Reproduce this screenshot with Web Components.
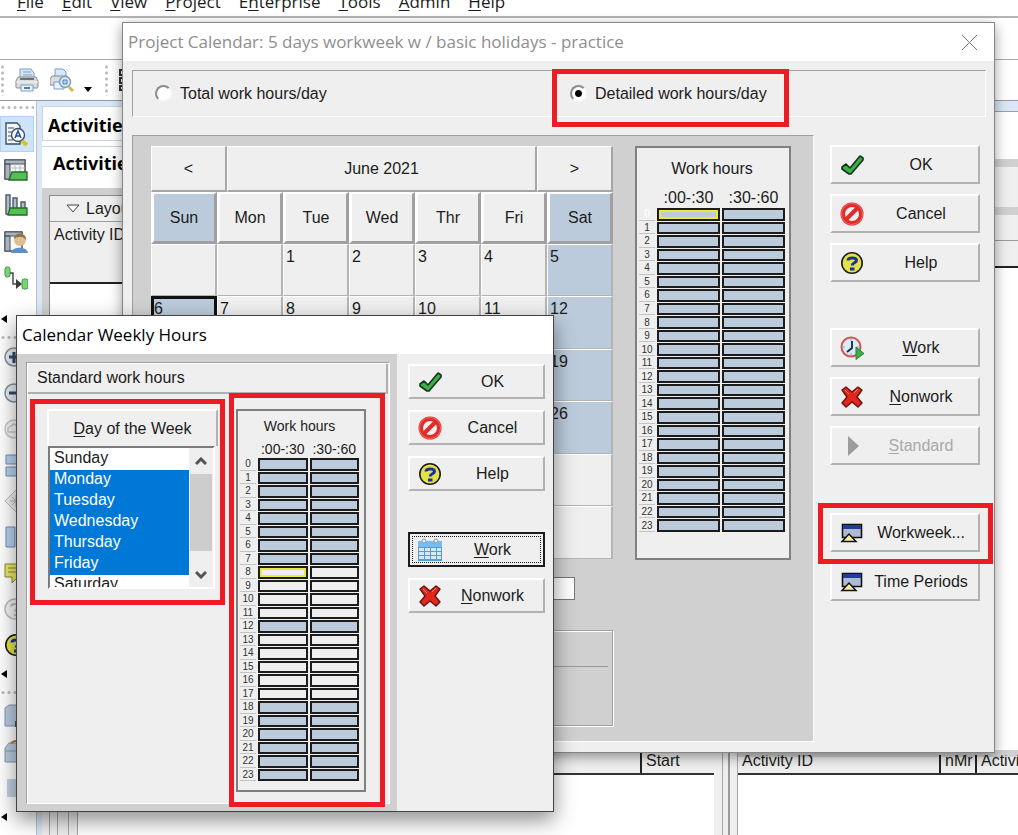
<!DOCTYPE html>
<html lang="en">
<head>
<meta charset="utf-8">
<title>Project Calendar</title>
<style>
  body {
    margin: 0;
    font: 16px/18px "Liberation Sans", Arial, sans-serif;
    color: #1c1c1c;
    background: #fff;
    --face: #efefef;
    --panel: #d0d0d0;
    --shade: #a6a6a6;
    --nonwork: #bccbdb;
    --mark: #ed1c24;
    --ui-font: "Open Sans", "Noto Sans", sans-serif;
  }
</style>
</head>
<body>
<p6-app></p6-app>

<script>
(function () {
  const icons = {
    check: '<path d="M2 14l4-3 4 4L20 3l3 2v2L11 21H9L2 16z" fill="#3fae49" stroke="#14351a" stroke-width="1.6" stroke-linejoin="round"/>',
    cancel: '<circle cx="12" cy="12" r="11.5" fill="#e02b2b"/><circle cx="12" cy="12" r="10.5" fill="none" stroke="#f06a5f"/><circle cx="12" cy="12" r="7" fill="#f4eeee"/><path d="M6 17.500L17.500 6" stroke="#e02b2b" stroke-width="4"/>',
    help: '<circle cx="12" cy="12" r="10.200" fill="#e3e248" stroke="#1d1d12" stroke-width="1.600"/><path d="M8 9.500C8 6 16.500 6 16.500 9.500c0 2.500-4.300 2-4.300 5" fill="none" stroke="#1b2fa5" stroke-width="3"/><path d="M10 16.500h4.500v3H10z" fill="#1b2fa5"/>',
    clock: '<circle cx="11" cy="11" r="9.500" fill="#d8ecfa" stroke="#cf5656" stroke-width="2"/><path d="M11 3v2M11 17v2M3 11h2M17 11h2" stroke="#7fa9c9"/><path d="M12 5v7l-5 4" fill="none" stroke="#16243c" stroke-width="1.800"/><path d="M16 11l8 6.500-8 6z" fill="#3fae49" stroke="#278036"/>',
    cross: '<path d="M2 5l4-3 6 5 6-5 4 3-5 7 5 6-4 4-6-5-6 5-4-4 5-6z" fill="#e3261b" stroke="#641410" stroke-width="1.400" stroke-linejoin="round"/><path d="M5 5l4 4M18 4l-4 4" stroke="#ff8a7c"/>',
    play: '<path d="M8 2l11 10L8 22z" fill="#9c9c9c"/>',
    slides: '<path d="M2.500 3.500h19v13h-19z" fill="#aebbd3" stroke="#111" stroke-width="1.600"/><path d="M3 4h18v4H3z" fill="#1d3c9c"/><path d="M2 20.500L9 13l7 7.500z" fill="#f6ee9d" stroke="#111" stroke-width="1.500"/>',
    month: '<path d="M0 3h24v20H0z" fill="#4f9cdf"/><path d="M0 3h24v6H0z" fill="#74bcf3"/><path d="M1 10h5v3H1zM7 10h5v3H7zM13 10h5v3h-5zM19 10h4v3h-4zM1 14h5v3H1zM7 14h5v3H7zM13 14h5v3h-5zM19 14h4v3h-4zM1 18h5v3H1zM7 18h5v3H7zM13 18h5v3h-5zM19 18h4v3h-4z" fill="#d3eafc"/><circle cx="6" cy="3" r="2" fill="#eee" stroke="#8a9aa8"/><circle cx="18" cy="3" r="2" fill="#eee" stroke="#8a9aa8"/>',
    printer: '<path d="M5 1h11l3 4v6H5z" fill="#d5e8fa" stroke="#7c9fc2"/><path d="M8 4h8M8 7h9" stroke="#7c9fc2"/><path d="M3 9h18l2 4v6q0 1-1 1H2q-1 0-1-1v-6z" fill="#dcdcdc" stroke="#8a8a8a"/><path d="M5 10h14v2H5z" fill="#6b7176"/><path d="M1 14h22" stroke="#f7f7f7"/><path d="M6 17h12v6H6z" fill="#eaf3fb" stroke="#7c9fc2"/><path d="M9 20h6" stroke="#4a7db3" stroke-width="2"/>',
    preview: '<path d="M5 1h8l3 3v5H5z" fill="#d5e8fa" stroke="#7c9fc2"/><path d="M2 8h15l1 3v6H0v-6z" fill="#dcdcdc" stroke="#8a8a8a"/><path d="M4 14h10v7H4z" fill="#eaf3fb" stroke="#7c9fc2"/><path d="M19 19l4 4" stroke="#e0b04a" stroke-width="3"/><circle cx="15" cy="14" r="5.500" fill="#e2effb" stroke="#7c9fc2" stroke-width="1.500"/><path d="M13 12h4v4h-4z" fill="#b8d5f0" stroke="#4a7db3"/>',
    find: '<path d="M2 1h11l3 3v18H2z" fill="#f4f8fc" stroke="#3d4f66" stroke-width="1.400"/><path d="M4 6h6M4 10h4M4 14h3M4 18h5" stroke="#3d4f66"/><path d="M18 19l5 4" stroke="#d9c32a" stroke-width="4"/><circle cx="14" cy="13" r="6.500" fill="#fff" stroke="#3d4f66" stroke-width="1.400"/><path d="M11 16l3-7 3 7M12 14h4" fill="none" stroke="#1f4f95" stroke-width="1.500"/>',
    grid: '<path d="M1 2h20v19H1z" fill="#f5f7f9" stroke="#4c5258" stroke-width="1.500"/><path d="M1 2h20v4H1zM1 6h5v15H1z" fill="#a9b4c1" stroke="#4c5258"/><path d="M6 10h15M11 6v15M16 6v15" stroke="#b9c0c7"/><path d="M8 14h15v8H5z" fill="#55c052" stroke="#236b29" stroke-width="1.300"/>',
    bars: '<path d="M2 1h4v19H2zM9 4h4v14H9zM17 8h4v9h-4z" fill="#aebccb" stroke="#4c5a69" stroke-width="1.400"/><path d="M6 14h17v7H4z" fill="#55c052" stroke="#236b29" stroke-width="1.300"/>',
    person: '<path d="M1 2h17v19H1z" fill="#f5f7f9" stroke="#4c5258" stroke-width="1.500"/><path d="M1 2h17v4H1zM1 6h5v15H1z" fill="#a9b4c1" stroke="#4c5258"/><path d="M7 23c1-7 16-7 17 0z" fill="#5b90c8"/><circle cx="16" cy="10" r="6" fill="#e2bd93"/><path d="M10 9c0-8 13-7 12 1-3-4-8-4-12-1z" fill="#8d7448"/>',
    trace: '<rect x="1" y="1" width="5" height="10" rx="2" fill="#7fd277" stroke="#3a9a3f"/><rect x="18" y="13" width="6" height="10" rx="2" fill="#7fd277" stroke="#3a9a3f"/><path d="M6 7h3v11h4" fill="none" stroke="#4a4a4a" stroke-width="1.500"/><path d="M12 13l6 5-6 5z" fill="#3c3c3c"/>',
    plus: '<circle cx="10" cy="12" r="9" fill="#e6edf4" stroke="#878f98" stroke-width="1.500"/><path d="M5 12h11M10 7v11" stroke="#324a68" stroke-width="3"/>',
    minus: '<circle cx="10" cy="12" r="9" fill="#e6edf4" stroke="#878f98" stroke-width="1.500"/><path d="M5 12h11" stroke="#324a68" stroke-width="3"/>',
    fit: '<circle cx="10" cy="12" r="9" fill="#f6f6f6" stroke="#c9c9c9" stroke-width="1.500"/><path d="M4 15v-4l6-4 6 4v4z" fill="none" stroke="#c9c9c9" stroke-width="1.500"/>',
    rows: '<path d="M2 2h20v9H2zM2 14h20v9H2z" fill="#b8d1ee" stroke="#6c8db5"/>',
    spark: '<path d="M1 12L12 1l11 11-11 11z" fill="#f0f0f0" stroke="#bdbdbd"/><path d="M6 12h12M12 6v12M8 8l8 8M16 8l-8 8" stroke="#b5b5b5"/>',
    columns: '<path d="M2 2h9v20H2zM14 2h9v20h-9z" fill="#b8d1ee" stroke="#6c8db5"/>',
    note: '<path d="M1 3h22v13h-9l-6 6v-6H1z" fill="#ece767" stroke="#8c8838"/><path d="M4 7h16M4 11h16" stroke="#8c8838"/>',
    faded: '<circle cx="11" cy="12" r="10" fill="#f3f3f3" stroke="#bdbdbd" stroke-width="1.500"/><path d="M7 9.500c0-3.500 8-3.500 8 0 0 2.500-4 2-4 5M11 17v2" fill="none" stroke="#bdbdbd" stroke-width="2"/>',
    store: '<path d="M1 4l4-3h14v21H1z" fill="#b9cbe0" stroke="#8297b0"/><path d="M11 17h10v6H11z" fill="#39536f"/>',
    load: '<path d="M1 8l4-5h14v19H1z" fill="#b9cbe0" stroke="#8297b0"/><path d="M1 11h20" stroke="#8297b0"/><path d="M7 3l6-3 6 5" fill="none" stroke="#b07a35" stroke-width="2"/>',
    sheet: '<path d="M3 3h18v18H3z" fill="#c3d1e2"/>',
    tree: '<path d="M1 2h7v5H1zM1 10h7v5H1zM1 18h7v4H1zM10 4h12M10 12h12M10 20h12" fill="none" stroke="#333" stroke-width="2"/>'
  };

  const svg = (name, size) =>
    `<svg width="${size}" height="${size}" viewBox="0 0 24 24" aria-hidden="true">${icons[name]}</svg>`;

  function define(name, html, setup) {
    const template = document.createElement('template');
    template.innerHTML = html;
    customElements.define(name, class extends HTMLElement {
      constructor() {
        super();
        this.attachShadow({ mode: 'open' });
      }

      connectedCallback() {
        if (this.shadowRoot.childNodes.length) return;
        this.shadowRoot.appendChild(template.content.cloneNode(true));
        if (setup) setup(this, this.shadowRoot);
      }
    });
  }

  // icon + caption push button
  define('p6-button', `
    <style>
      :host { display: block; }
      button {
        display: flex;
        align-items: center;
        box-sizing: border-box;
        width: 100%;
        height: var(--button-height, 39px);
        padding: 0 2px 0 8px;
        font: inherit;
        color: inherit;
        background: var(--face);
        border: 2px solid;
        border-color: #fff #b2b2b2 #b2b2b2 #fff;
      }
      button:disabled { color: #a9a9a9; }
      span { flex: 1; white-space: nowrap; text-align: center; }
      svg { flex: none; margin-right: 2px; }
      ::slotted(u) { text-underline-offset: 2px; }
      :host([focused]) button {
        border-color: #1c1c1c;
        outline: 1px dotted #1c1c1c;
        outline-offset: -5px;
      }
    </style>
    <button type="button"><span><slot></slot></span></button>
  `, (host, root) => {
    const button = root.querySelector('button');
    button.disabled = host.hasAttribute('disabled');
    button.insertAdjacentHTML('afterbegin', svg(host.getAttribute('icon'), 24));
  });

  // red frame drawn over whatever is slotted
  define('p6-mark', `
    <style>
      :host { display: block; position: relative; }
      :host::after {
        content: "";
        position: absolute;
        inset: var(--reach);
        border: 5px solid var(--mark);
        pointer-events: none;
        z-index: 1;
      }
    </style>
    <slot></slot>
  `);

  define('p6-radio', `
    <style>
      :host { display: block; }
      label { display: flex; align-items: center; gap: 8px; }
      input {
        appearance: none;
        width: 17px;
        height: 17px;
        margin: 0;
        border: 2px solid;
        border-color: #8b8b8b #f8f8f8 #f8f8f8 #8b8b8b;
        border-radius: 50%;
        background: #fff;
      }
      input:checked { background: radial-gradient(circle, #000 3px, #fff 4px); }
    </style>
    <label><input type="radio" name="mode"><span><slot></slot></span></label>
  `, (host, root) => {
    root.querySelector('input').checked = host.hasAttribute('checked');
  });

  define('p6-window', `
    <style>
      :host {
        display: block;
        position: absolute;
        border: 1px solid #858585;
        box-sizing: border-box;
        background: var(--face);
        box-shadow: 0 4px 12px rgba(0, 0, 0, 0.4);
      }
      header {
        display: flex;
        align-items: center;
        justify-content: space-between;
        height: 38px;
        padding: 0 16px 0 5px;
        font: 17px/24px var(--ui-font);
        background: #fff;
        color: #000;
      }
      :host([inactive]) header { color: #8e8e8e; }
      h1 { margin: 0; font: inherit; white-space: nowrap; }
      button { display: none; padding: 0; border: 0; background: none; }
      :host([closable]) button { display: block; }
      svg { display: block; }
    </style>
    <header>
      <h1></h1>
      <button type="button" aria-label="Close">
        <svg width="17" height="17" viewBox="0 0 17 17"><path d="M1 1l15 15M16 1L1 16" stroke="#777" fill="none"/></svg>
      </button>
    </header>
    <slot></slot>
  `, (host, root) => {
    root.querySelector('h1').textContent = host.getAttribute('heading');
  });

  define('p6-month', `
    <style>
      :host { display: block; }
      nav { display: flex; height: 46px; background: var(--face); }
      nav > * {
        display: flex;
        align-items: center;
        justify-content: center;
        box-sizing: border-box;
        padding: 0;
        font: inherit;
        color: inherit;
        background: var(--face);
        border: solid;
        border-width: 1px 2px 2px 1px;
        border-color: #fff var(--shade) var(--shade) #fff;
      }
      nav button { width: 76px; }
      nav span { flex: 1; }
      table {
        width: 100%;
        table-layout: fixed;
        border-collapse: separate;
        border-spacing: 0;
      }
      th {
        height: 52px;
        box-sizing: border-box;
        padding: 0;
        font-weight: normal;
        background: var(--face);
        border: solid;
        border-width: 2px 3px 3px 3px;
        border-color: #fff #a0a0a0 #a0a0a0 #fff;
      }
      td {
        height: 52px;
        box-sizing: border-box;
        padding: 3px 2px 0;
        vertical-align: top;
        background: var(--face);
        border: solid;
        border-width: 1px 2px 1px 1px;
        border-color: #fff #b4b4b4 #b4b4b4 #fff;
      }
      tr:nth-child(even) td { height: 53px; }
      .off { background: var(--nonwork); }
      td.current { padding: 1px 0 0; border: 3px solid #111; }
    </style>
    <nav>
      <button type="button">&lt;</button>
      <span>June 2021</span>
      <button type="button">&gt;</button>
    </nav>
    <table>
      <thead><tr></tr></thead>
      <tbody></tbody>
    </table>
  `, (host, root) => {
    const days = ['Sun', 'Mon', 'Tue', 'Wed', 'Thr', 'Fri', 'Sat'];
    const weekend = i => i === 0 || i === 6;
    root.querySelector('thead tr').innerHTML = days
      .map((d, i) => `<th scope="col" class="${weekend(i) ? 'off' : ''}">${d}</th>`).join('');

    let rows = '';
    for (let w = 0; w < 6; w++) {
      rows += '<tr>';
      for (let i = 0; i < 7; i++) {
        const n = w * 7 + i - 1;
        const inMonth = n > 0 && n < 31;
        const cls = [inMonth && weekend(i) ? 'off' : '', n === 6 ? 'current' : ''].join(' ');
        rows += `<td class="${cls}">${inMonth ? n : ''}</td>`;
      }
      rows += '</tr>';
    }
    root.querySelector('tbody').innerHTML = rows;
  });

  // 24 rows of half-hour slots; work="8-11,13-17" leaves those hours unshaded
  define('p6-hours', `
    <style>
      :host {
        display: block;
        box-sizing: border-box;
        padding: 10px 2px 25px 0;
        background: var(--face);
        border: 2px solid #808080;
      }
      table {
        width: 100%;
        height: 353px;
        table-layout: fixed;
        border-collapse: separate;
        border-spacing: 2px 1px;
      }
      caption { line-height: 22px; }
      thead th { height: 26px; padding: 0; font-weight: normal; vertical-align: bottom; white-space: nowrap; }
      thead th:first-child { width: 16px; }
      tbody th {
        padding: 0;
        font: 10px/11px "Liberation Sans", Arial, sans-serif;
        color: #333;
        border-bottom: 1px solid #c4c4c4;
      }
      td { padding: 0; background: var(--face); border: 2px solid #1c1c1c; }
      td.off { background: var(--nonwork); }
      td.cursor { box-shadow: inset 0 0 0 2px #ece83f; }
      th.blank { color: #fff; }
      :host([compact]) { padding: 6px 3px 8px 0; font-size: 14px; }
      :host([compact]) table { height: 347px; }
      :host([compact]) caption { line-height: 18px; }
      :host([compact]) thead th { height: 21px; line-height: 16px; }
    </style>
    <table>
      <caption>Work hours</caption>
      <thead><tr><th></th><th scope="col">:00-:30</th><th scope="col">:30-:60</th></tr></thead>
      <tbody></tbody>
    </table>
  `, (host, root) => {
    const ranges = (host.getAttribute('work') || '').split(',').filter(Boolean)
      .map(r => r.split('-').map(Number));
    const cursor = Number(host.getAttribute('cursor'));
    let rows = '';
    for (let h = 0; h < 24; h++) {
      const cls = ranges.some(([a, b]) => h >= a && h <= b) ? '' : 'off';
      const blank = h === 0 && cursor === 0 ? 'blank' : '';
      rows += `<tr><th scope="row" class="${blank}">${h}</th>
        <td class="${cls} ${h === cursor ? 'cursor' : ''}"></td><td class="${cls}"></td></tr>`;
    }
    root.querySelector('tbody').innerHTML = rows;
  });

  define('p6-daylist', `
    <style>
      :host { display: block; }
      label {
        display: block;
        height: 37px;
        box-sizing: border-box;
        line-height: 36px;
        text-align: center;
        border: solid;
        border-width: 2px 2px 0;
        border-color: #fff #b2b2b2 #fff #fff;
      }
      u { text-underline-offset: 2px; }
      .box {
        display: flex;
        height: 143px;
        box-sizing: border-box;
        margin-right: 3px;
        margin-left: 1px;
        background: #fff;
        border: 2px solid;
        border-color: #7b7b7b #fff #fff #7b7b7b;
      }
      select {
        flex: 1;
        height: 100%;
        min-width: 0;
        padding: 1px 0 0;
        border: 0;
        outline: 0;
        font: inherit;
        color: inherit;
        background: #fff;
        overflow: hidden;
        scrollbar-width: none;
      }
      option { height: 21px; min-height: 21px; padding: 0 4px; box-sizing: border-box; line-height: 21px; }
      option:checked { background: #0078d7 linear-gradient(#0078d7, #0078d7); color: #fff; }
      .bar { display: flex; flex-direction: column; width: 24px; background: var(--face); }
      .bar button { height: 26px; padding: 0; border: 0; background: none; }
      .bar i { height: 77px; margin: 0 1px; background: #cdcdcd; }
      .bar button:last-child { margin-top: auto; }
      svg { display: block; margin: auto; }
    </style>
    <label for="days"><u>D</u>ay of the Week</label>
    <div class="box">
      <select id="days" multiple size="7">
        <option>Sunday</option>
        <option selected>Monday</option>
        <option selected>Tuesday</option>
        <option selected>Wednesday</option>
        <option selected>Thursday</option>
        <option selected>Friday</option>
        <option>Saturday</option>
      </select>
      <div class="bar">
        <button type="button" aria-label="Up"><svg width="12" height="9" viewBox="0 0 12 9"><path d="M1 7l5-5 5 5" fill="none" stroke="#555" stroke-width="3"/></svg></button>
        <i></i>
        <button type="button" aria-label="Down"><svg width="12" height="9" viewBox="0 0 12 9"><path d="M1 2l5 5 5-5" fill="none" stroke="#555" stroke-width="3"/></svg></button>
      </div>
    </div>
  `);

  define('p6-rail', `
    <style>
      :host {
        display: block;
        flex: none;
        width: 36px;
        background: #fff;
        border-right: 1px solid #b9c3ce;
      }
      .dots { height: 3px; margin-right: 2px; background: radial-gradient(circle, #bdbdbd 1px, transparent 2px) 0 0 / 6px 3px; }
      .more { display: flex; align-items: center; height: 22px; padding: 0 0 0 1px; border: 0; background: none; }
      .tool { display: flex; align-items: center; width: 34px; height: 36px; padding: 0 4px; border: 0; background: none; }
      .tool.on { background: #cde4fb; box-shadow: inset 0 0 0 1px #aed3f7; }
      section { padding-bottom: 6px; }
      section:first-of-type { padding-top: 5px; }
      section:first-of-type .dots { margin-bottom: 7px; }
      section:first-of-type .more { margin-top: 12px; }
      section:last-of-type .dots { margin-bottom: 4px; }
    </style>
  `, (host, root) => {
    const groups = [
      ['find', 'grid', 'bars', 'person', 'trace'],
      ['plus', 'minus', 'fit', 'rows', 'spark', 'columns', 'note', 'faded', 'help'],
      ['store', 'load', 'sheet']
    ];
    const arrow = '<svg width="6" height="8" viewBox="0 0 6 8"><path d="M6 0v8L0 4z" fill="#000"/></svg>';
    groups.forEach((names, g) => {
      const section = document.createElement('section');
      section.innerHTML = '<div class="dots"></div>'
        + names.map((n, i) => `<button type="button" class="tool ${g + i === 0 ? 'on' : ''}" aria-label="${n}">${svg(n, 24)}</button>`).join('')
        + `<button type="button" class="more" aria-label="more">${arrow}</button>`;
      root.appendChild(section);
    });
  });

  define('p6-weekly', `
    <style>
      :host { display: flex; }
      .left { flex: 1; padding: 8px 7px 7px 9px; background: var(--panel); }
      .sheet { height: 440px; background: var(--face); border: 1px solid; border-color: #a0a0a0 #fff #fff #a0a0a0; box-shadow: inset 1px 1px #fff; }
      h2 {
        margin: 1px;
        padding: 0 9px;
        font: inherit;
        line-height: 28px;
        border-right: 2px solid #b0b0b0;
        border-bottom: 2px solid #b0b0b0;
      }
      .row { display: flex; align-items: flex-start; gap: 18px; padding: 14px 23px 0 20px; }
      .days { flex: 1; --reach: -10px -7px -16px -17px; }
      .slots { width: 130px; --reach: -16px -19px -15px -7px; }
      .actions {
        display: flex;
        flex-direction: column;
        gap: 11px;
        width: 137px;
        padding: 10px 8px 0 11px;
        --button-height: 35px;
      }
      .actions .apart { margin-top: 30px; }
    </style>
    <div class="left">
      <div class="sheet">
        <h2>Standard work hours</h2>
        <div class="row">
          <p6-mark class="days"><p6-daylist></p6-daylist></p6-mark>
          <p6-mark class="slots"><p6-hours compact work="8-11,13-17" cursor="8"></p6-hours></p6-mark>
        </div>
      </div>
    </div>
    <div class="actions">
      <p6-button icon="check">OK</p6-button>
      <p6-button icon="cancel">Cancel</p6-button>
      <p6-button icon="help">Help</p6-button>
      <p6-button icon="month" class="apart" focused><u>W</u>ork</p6-button>
      <p6-button icon="cross"><u>N</u>onwork</p6-button>
    </div>
  `);

  define('p6-calendar', `
    <style>
      :host { display: block; padding: 9px 8px 10px 9px; }
      .modes {
        display: grid;
        grid-template-columns: 1fr 1fr;
        align-items: center;
        height: 45px;
        padding-left: 22px;
        border: 1px solid;
        border-color: #a0a0a0 #fff #fff #a0a0a0;
      }
      .modes p6-mark { justify-self: start; --reach: -16px -22px -24px -18px; }
      .main { display: flex; margin-top: 18px; }
      .panel {
        flex: 1;
        display: flex;
        align-items: flex-start;
        gap: 22px;
        padding: 10px 22px 15px 18px;
        background: var(--panel);
        border: 1px solid;
        border-color: #a0a0a0 #fff #fff #a0a0a0;
      }
      .month { flex: 1; display: flex; flex-direction: column; }
      .month input {
        align-self: flex-end;
        width: 120px;
        height: 23px;
        box-sizing: border-box;
        margin: 18px 38px 0 0;
        border: 1px solid #777;
        background: #fff;
      }
      fieldset { height: 96px; box-sizing: border-box; margin: 30px 0 0; padding: 35px 4px 0; border: 1px solid #a0a0a0; box-shadow: 1px 1px #fff, inset 1px 1px #fff; }
      hr { margin: 0; border: 0; border-top: 1px solid #999; }
      p6-hours { width: 156px; }
      .actions { display: flex; flex-direction: column; gap: 10px; width: 150px; margin: 10px 6px 0 16px; }
      .actions .apart { margin-top: 36px; }
      .actions .mark { margin-top: 38px; --reach: -10px -13px -12px -12px; }
    </style>
    <div class="modes">
      <p6-radio>Total work hours/day</p6-radio>
      <p6-mark><p6-radio checked>Detailed work hours/day</p6-radio></p6-mark>
    </div>
    <div class="main">
      <div class="panel">
        <div class="month">
          <p6-month></p6-month>
          <input type="text" aria-label="Hours">
          <fieldset><hr></fieldset>
        </div>
        <p6-hours cursor="0"></p6-hours>
      </div>
      <div class="actions">
        <p6-button icon="check">OK</p6-button>
        <p6-button icon="cancel">Cancel</p6-button>
        <p6-button icon="help">Help</p6-button>
        <p6-button icon="clock" class="apart"><u>W</u>ork</p6-button>
        <p6-button icon="cross"><u>N</u>onwork</p6-button>
        <p6-button icon="play" disabled><u>S</u>tandard</p6-button>
        <p6-mark class="mark"><p6-button icon="slides">Wo<u>r</u>kweek...</p6-button></p6-mark>
        <p6-button icon="slides">Time Periods</p6-button>
      </div>
    </div>
  `);

  define('p6-app', `
    <style>
      :host { display: flex; flex-direction: column; position: relative; height: 100vh; overflow: hidden; }
      .menu {
        display: flex;
        align-items: flex-end;
        gap: 18px;
        height: 18px;
        padding: 0 17px 4px;
        box-sizing: border-box;
        overflow: hidden;
        border-bottom: 2px solid #b4b4b4;
        flex: none;
      }
      .menu button { padding: 0; border: 0; background: none; font: 17px/20px var(--ui-font); color: #1c1c1c; }
      .menu u { text-underline-offset: 2px; }
      .blank { flex: none; height: 41px; border-bottom: 1px solid #a8a8a8; }
      .tools { display: flex; flex: none; align-items: center; height: 41px; box-sizing: border-box; padding-left: 1px; border-bottom: 1px solid #8f9ba8; }
      .tools button { flex: none; padding: 0; border: 0; background: none; margin-left: 11px; }
      .tools svg { display: block; }
      .tools .drop { margin: 18px 13px 0 10px; }
      .grip { flex: none; width: 3px; height: 32px; background: radial-gradient(circle, #bdbdbd 1px, transparent 2px) 0 0 / 3px 6px; }
      .work { flex: 1; display: flex; min-height: 0; }
      .panes { flex: 1; display: flex; min-width: 0; padding: 5px 0 0 5px; background: #d9e7f6; }
      .pane { display: flex; flex-direction: column; min-width: 0; }
      .pane.a { flex: 672; background: #fff; }
      .pane.b { flex: 280; background: #fff; }
      h2, h3 { margin: 0; font: bold 18px/24px var(--ui-font); color: #000; background: #fff; }
      h2 { padding: 6px 5px 3px; border: 1px solid #c9d5e1; }
      h3 { margin-top: 5px; padding: 4px 11px 13px; border-top: 1px solid #c9d5e1; }
      .upper { flex: 1; padding: 7px 0 0 7px; background: var(--panel); }
      .table { height: 100%; background: #fff; border: 1px solid #8c8c8c; }
      .layout { display: flex; align-items: center; gap: 6px; height: 25px; padding-left: 16px; background: var(--face); border-bottom: 1px solid #9c9c9c; }
      .head { height: 62px; padding: 4px 4px 0; box-sizing: border-box; background: var(--face); border-bottom: 2px solid #222; }
      .foot { display: flex; flex: none; height: 95px; }
      .foot > i { box-sizing: border-box; background: var(--face); border-right: 1px solid #a6a6a6; }
      .foot > div { flex: 1; min-width: 0; }
      .cols { display: flex; align-items: flex-end; height: 35px; box-sizing: border-box; background: var(--face); border-bottom: 2px solid #333; }
      .cols span { height: 26px; padding: 5px 4px 0; box-sizing: border-box; overflow: hidden; white-space: nowrap; border-left: 2px solid #222; }
      .cols span:first-child { flex: 1; border: 0; }
      .cols .start { width: 74px; }
      .cols .mid { width: 36px; }
      .cols .last { width: 43px; }
      .split { flex: none; width: 24px; background: linear-gradient(90deg, var(--face) 8px, #a6a6a6 8px 9px, var(--face) 9px 14px, #999 14px 16px, var(--face) 16px 23px, #a6a6a6 23px); }
      .b .strip { height: 5px; background: #d9e7f6; border-bottom: 1px solid #a0a0a0; }
      .b .title { height: 47px; }
      .b .band { height: 40px; background: var(--face); border: solid var(--panel); border-width: 8px 0; }
      .b .layout { padding: 0; }
      .b .head { height: 27px; }
      .b .rest { flex: 1; }
      .b .foot { height: 85px; border-top: 7px solid var(--panel); box-sizing: border-box; }
      .b .cols { height: 18px; }
      .b .cols span { height: 18px; padding: 0 4px; line-height: 12px; }
      p6-window.calendar { top: 22px; left: 122px; right: 23px; }
      p6-window.weekly { top: 315px; left: 16px; width: 538px; border-color: #444; box-shadow: 0 8px 20px rgba(0, 0, 0, 0.45); }
    </style>
    <nav class="menu">
      <button type="button"><u>F</u>ile</button>
      <button type="button"><u>E</u>dit</button>
      <button type="button"><u>V</u>iew</button>
      <button type="button"><u>P</u>roject</button>
      <button type="button">E<u>n</u>terprise</button>
      <button type="button"><u>T</u>ools</button>
      <button type="button"><u>A</u>dmin</button>
      <button type="button"><u>H</u>elp</button>
    </nav>
    <div class="blank"></div>
    <div class="tools">
      <span class="grip"></span>
      <button type="button" aria-label="Print">${svg('printer', 24)}</button>
      <button type="button" aria-label="Preview">${svg('preview', 24)}</button>
      <button type="button" aria-label="More" class="drop"><svg width="8" height="5" viewBox="0 0 8 5"><path d="M0 0h8L4 5z"/></svg></button>
      <span class="grip"></span>
      <button type="button" aria-label="Outline">${svg('tree', 24)}</button>
    </div>
    <div class="work">
      <p6-rail></p6-rail>
      <div class="panes">
        <div class="pane a">
          <h2>Activities</h2>
          <h3>Activities</h3>
          <div class="upper">
            <div class="table">
              <div class="layout"><svg width="14" height="9" viewBox="0 0 14 9"><path d="M1 1h12L7 8z" fill="#fff" stroke="#444"/></svg>Layout</div>
              <div class="head">Activity ID</div>
            </div>
          </div>
          <div class="foot">
            <i style="width: 8px"></i><i style="width: 8px"></i><i style="width: 11px"></i><i style="width: 9px"></i>
            <div><div class="cols"><span></span><span class="start">Start</span></div></div>
          </div>
        </div>
        <div class="split"></div>
        <div class="pane b">
          <div class="strip"></div>
          <div class="title"></div>
          <div class="band"></div>
          <div class="layout"></div>
          <div class="head"></div>
          <div class="rest"></div>
          <div class="foot">
            <div><div class="cols"><span>Activity ID</span><span class="mid">nMr</span><span class="last">Activity</span></div></div>
          </div>
        </div>
      </div>
    </div>
    <p6-window class="calendar" heading="Project Calendar: 5 days workweek w / basic holidays - practice" inactive closable>
      <p6-calendar></p6-calendar>
    </p6-window>
    <p6-window class="weekly" heading="Calendar Weekly Hours">
      <p6-weekly></p6-weekly>
    </p6-window>
  `);
})();
</script>
</body>
</html>
